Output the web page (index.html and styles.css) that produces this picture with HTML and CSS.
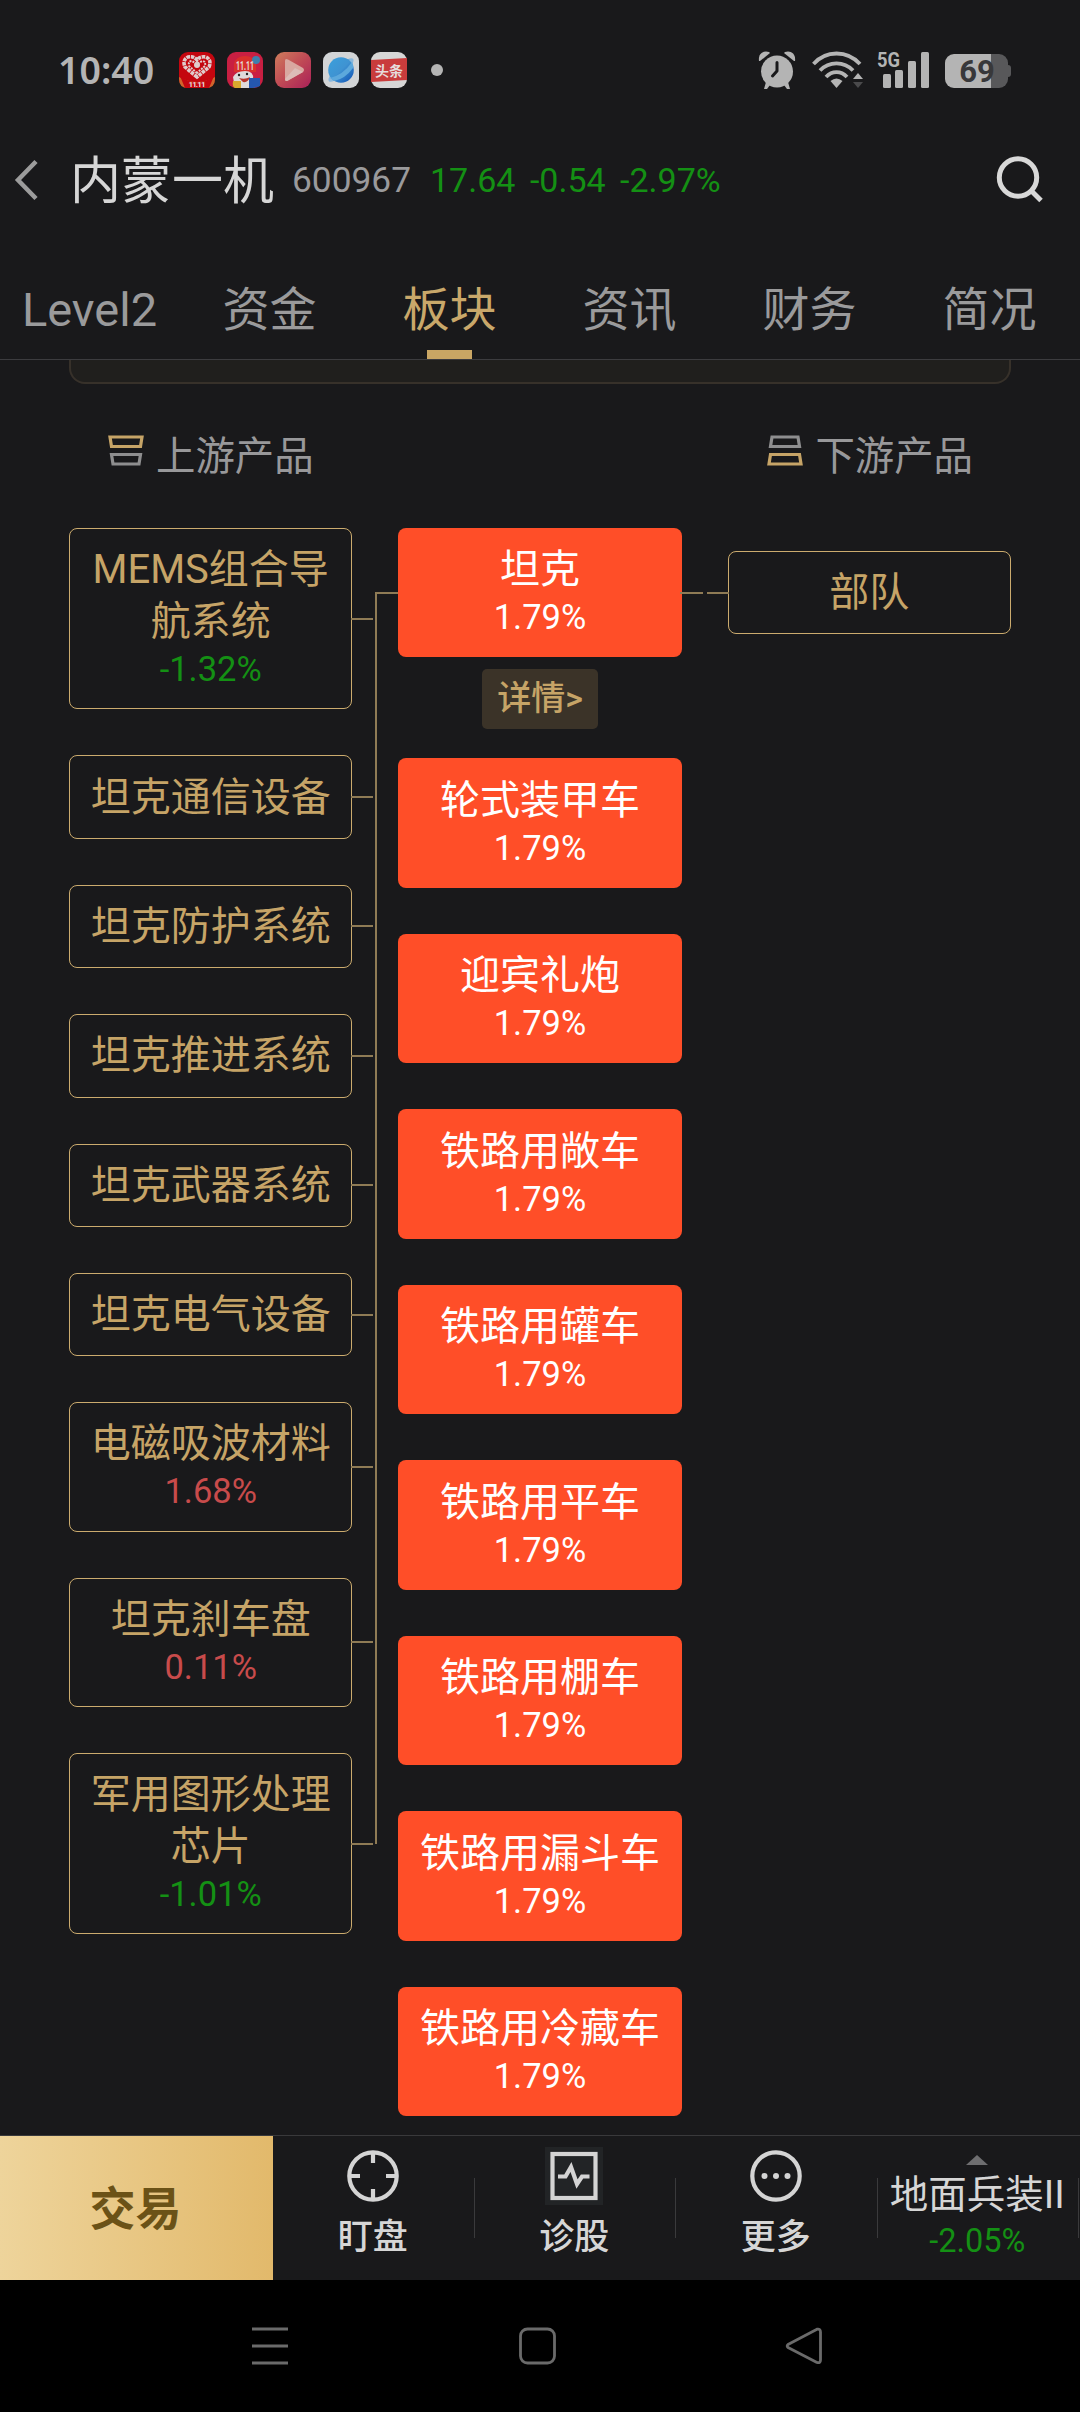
FILE: index.html
```html
<!DOCTYPE html>
<html lang="zh-CN">
<head>
<meta charset="UTF-8">
<meta name="viewport" content="width=device-width, initial-scale=1.0">
<title>内蒙一机 600967</title>
<link rel="stylesheet" href="styles.css">
</head>
<body>

<div class="status-bar">
  <span class="time">10:40</span>
  <div class="notifications">
    <svg class="app-icon" viewBox="0 0 36 36">
      <rect width="36" height="36" rx="9" fill="#c4060f"/>
      <path d="M0 25 Q18 35 36 25 V27 Q36 36 27 36 H9 Q0 36 0 27Z" fill="#d2642c"/>
      <path d="M1 24 Q18 37 35 24 L30 36 H6Z" fill="#c4060f"/>
      <path d="M18 25 L6 15 Q3 8 9 5 Q15 4 18 8 Q21 4 27 5 Q33 8 30 15Z" fill="none" stroke="#e0cccc" stroke-width="3.600" stroke-dasharray="3.500 .8"/>
      <path d="M18 21 L10 14 Q9 9 13 9 L18 12 L23 9 Q27 9 26 14Z" fill="none" stroke="#e0cccc" stroke-width="2" stroke-dasharray="2 1"/>
      <circle cx="18" cy="13" r="3" fill="#e0cccc"/>
      <text x="18" y="34.500" class="icon-text" font-size="8" textLength="17">11.11</text>
    </svg>
    <svg class="app-icon" viewBox="0 0 36 36">
      <rect width="36" height="36" rx="9" fill="#c81f42"/>
      <path d="M7 20 V12 Q9 4 18 4 Q27 4 29 12 V20Z" fill="#d8302c"/>
      <circle cx="29" cy="8" r="4" fill="#3d7fae"/>
      <text x="18" y="18" class="icon-text" font-size="12" textLength="18" lengthAdjust="spacingAndGlyphs">11.11</text>
      <path d="M6 25 Q9 19 18 19 Q27 19 26 27 V36 H8Z" fill="#dedada"/>
      <path d="M12 26 Q18 28 23 25 Q21 31 16 30Z" fill="#b8362c"/>
      <circle cx="12" cy="23" r="1.2" fill="#222"/><circle cx="20" cy="22" r="1.2" fill="#222"/>
      <path d="M6 29 H14 V36 H8 Q5 35 6 29Z" fill="#d9a92e"/>
      <path d="M22 26 H33 V34 Q30 36 22 36Z" fill="#2457ae"/>
    </svg>
    <svg class="app-icon" viewBox="0 0 36 36">
      <defs>
        <linearGradient id="video" x1="0" y1="0" x2="1" y2="1">
          <stop offset="0" stop-color="#cf7d5c"/><stop offset=".5" stop-color="#c04a55"/><stop offset="1" stop-color="#a92058"/>
        </linearGradient>
        <linearGradient id="planet" x1="0" y1="0" x2="1" y2="1">
          <stop offset="0" stop-color="#3ba0dc"/><stop offset=".5" stop-color="#3f93d2"/><stop offset="1" stop-color="#0d4fb4"/>
        </linearGradient>
      </defs>
      <rect width="36" height="36" rx="9" fill="url(#video)"/>
      <path d="M10 9 Q10 6 13 7.500 L28 16 Q30 18 28 20 L13 28.500 Q10 30 10 27Z" fill="#d9a8a0"/>
      <path d="M10 27 L20 16 L28 20 L13 28.500 Q10 30 10 27Z" fill="#dcbcb7"/>
    </svg>
    <svg class="app-icon" viewBox="0 0 36 36">
      <rect width="36" height="36" rx="9" fill="#d2d4d6"/>
      <ellipse cx="18" cy="18" rx="16.500" ry="5" transform="rotate(-43 18 18)" fill="#8ab8dc"/>
      <circle cx="18" cy="18" r="12.800" fill="url(#planet)"/>
      <path d="M7 26 Q20 23 29 10 Q31 14 30 16 Q22 27 11 29Z" fill="#5ca8dc"/>
    </svg>
    <svg class="app-icon" viewBox="0 0 36 36">
      <rect width="36" height="36" rx="9" fill="#d6d6d6"/>
      <path d="M0 8 L36 6 V28 L0 30Z" fill="#c93c3c"/>
      <text x="18" y="24" class="icon-text" font-size="14">头条</text>
    </svg>
  </div>
  <span class="dot"></span>
  <div class="system">
    <svg class="alarm" width="38" height="38" viewBox="0 0 38 38">
      <g fill="#b4b4b4">
        <path d="M1 10 C0 3 5 -1 11 1 L12 2 L2 10Z"/>
        <path d="M37 10 C38 3 33 -1 27 1 L26 2 L36 10Z"/>
        <circle cx="19" cy="20.500" r="16"/>
        <path d="M8 31 L12 34 L9 38 H6Z M30 31 L26 34 L29 38 H32Z"/>
      </g>
      <path d="M19 11.500 V20 L14.500 25" fill="none" stroke="#19191b" stroke-width="3" stroke-linecap="round" stroke-linejoin="round"/>
    </svg>
    <svg class="wifi" width="51" height="38" viewBox="0 0 51 38">
      <g fill="none" stroke="#b4b4b4" stroke-width="3.800">
        <path d="M1.500 13 C14 -1 35 -1 48 13"/>
        <path d="M8 19.500 C17 10 32 10 41 19.500"/>
        <path d="M14 26 C20 19.500 29 19.500 35 26"/>
      </g>
      <path d="M18.500 30 Q24.500 25 30.500 30 L24.500 37Z" fill="#b4b4b4"/>
      <path d="M41 28 L46 22 L51 28Z" fill="#b4b4b4"/>
      <path d="M41 31 L46 37 L51 31Z" fill="#4a4a4c"/>
    </svg>
    <svg class="signal" width="53" height="46" viewBox="0 -8 53 46">
      <text x="0" y="16" textLength="23" lengthAdjust="spacingAndGlyphs" class="net">5G</text>
      <g fill="#b4b4b4">
        <rect x="6" y="23" width="8" height="14" rx="1.500"/>
        <rect x="18" y="19" width="8" height="18" rx="1.500"/>
        <rect x="31" y="10" width="8" height="27" rx="1.500"/>
        <rect x="44" y="1" width="8" height="36" rx="1.500"/>
      </g>
    </svg>
    <div class="battery">69</div>
  </div>
</div>

<div class="header">
  <svg class="back" width="24" height="42" viewBox="0 0 24 42">
    <path d="M22 2.500 L4 21 L22 39.500" fill="none" stroke="#9c9c9c" stroke-width="4.500"/>
  </svg>
  <h1>内蒙一机</h1>
  <span class="code">600967</span>
  <div class="quote">
    <span>17.64</span>
    <span>-0.54</span>
    <span>-2.97%</span>
  </div>
  <svg class="search" width="48" height="50" viewBox="0 0 48 50">
    <circle cx="22" cy="22.500" r="18.700" fill="none" stroke="#d8d8d8" stroke-width="5"/>
    <path d="M35.500 36 L45 45.500" stroke="#d8d8d8" stroke-width="5"/>
  </svg>
</div>

<div class="tabs">
  <div class="tab">Level2</div>
  <div class="tab">资金</div>
  <div class="tab active">板块</div>
  <div class="tab">资讯</div>
  <div class="tab">财务</div>
  <div class="tab">简况</div>
</div>

<div class="content">
  <div class="card-end"></div>

  <div class="legend">
    <div class="legend-item">
      <svg width="36" height="32" viewBox="0 0 36 32" fill="none" stroke-width="3.200">
        <path d="M2 2 H34 L32.500 11.500 H3.500Z" stroke="#c6a467"/>
        <path d="M3.500 19.500 H32.500 L31 29 H5Z" stroke="#8e8e8f"/>
      </svg>
      <span>上游产品</span>
    </div>
    <div class="legend-item">
      <svg width="36" height="32" viewBox="0 0 36 32" fill="none" stroke-width="3.200">
        <path d="M5 2 H31 L32.500 11.500 H3.500Z" stroke="#8e8e8f"/>
        <path d="M3.500 19.500 H32.500 L34 29 H2Z" stroke="#c6a467"/>
      </svg>
      <span>下游产品</span>
    </div>
  </div>

  <div class="chain">
    <div class="column upstream">
      <div class="box">MEMS组合导航系统<span class="pct down">-1.32%</span></div>
      <div class="box">坦克通信设备</div>
      <div class="box">坦克防护系统</div>
      <div class="box">坦克推进系统</div>
      <div class="box">坦克武器系统</div>
      <div class="box">坦克电气设备</div>
      <div class="box">电磁吸波材料<span class="pct up">1.68%</span></div>
      <div class="box">坦克刹车盘<span class="pct up">0.11%</span></div>
      <div class="box">军用图形处理芯片<span class="pct down">-1.01%</span></div>
      <div class="trunk"></div>
    </div>

    <div class="column products">
      <div class="product current">坦克<span class="pct">1.79%</span></div>
      <div class="detail">详情&gt;</div>
      <div class="product">轮式装甲车<span class="pct">1.79%</span></div>
      <div class="product">迎宾礼炮<span class="pct">1.79%</span></div>
      <div class="product">铁路用敞车<span class="pct">1.79%</span></div>
      <div class="product">铁路用罐车<span class="pct">1.79%</span></div>
      <div class="product">铁路用平车<span class="pct">1.79%</span></div>
      <div class="product">铁路用棚车<span class="pct">1.79%</span></div>
      <div class="product">铁路用漏斗车<span class="pct">1.79%</span></div>
      <div class="product">铁路用冷藏车<span class="pct">1.79%</span></div>
    </div>

    <div class="column downstream">
      <div class="box">部队</div>
    </div>
  </div>
</div>

<div class="bottom-bar">
  <div class="trade">交易</div>
  <div class="action">
    <svg width="58" height="58" viewBox="0 0 58 58" fill="none" stroke="#d4d4d4" stroke-width="4.200">
      <circle cx="29" cy="29" r="23.700"/>
      <path d="M29 5 V16 M29 42 V53 M5 29 H16 M42 29 H53"/>
    </svg>
    <span>盯盘</span>
  </div>
  <div class="action">
    <svg width="58" height="58" viewBox="0 0 58 58" fill="none" stroke="#d4d4d4" stroke-width="4.200">
      <rect width="58" height="58" fill="#222426" stroke="none"/>
      <rect x="7.500" y="7" width="43" height="44"/>
      <path d="M13 29.500 H20.500 L26 20 L32 37 L37 29.500 H44.500"/>
    </svg>
    <span>诊股</span>
  </div>
  <div class="action">
    <svg width="58" height="58" viewBox="0 0 58 58">
      <circle cx="29" cy="29" r="23.700" fill="none" stroke="#d4d4d4" stroke-width="4.200"/>
      <g fill="#d4d4d4"><circle cx="17.500" cy="29" r="3"/><circle cx="29" cy="29" r="3"/><circle cx="40.500" cy="29" r="3"/></g>
    </svg>
    <span>更多</span>
  </div>
  <div class="sector">
    <svg width="22" height="10" viewBox="0 0 22 10"><path d="M0 10 L11 0 L22 10Z" fill="#6e6e70"/></svg>
    <span class="sector-name">地面兵装II</span>
    <span class="sector-pct">-2.05%</span>
  </div>
</div>

<div class="nav-bar">
  <svg width="38" height="38" viewBox="0 0 38 38" fill="none" stroke="#6a6a6a" stroke-width="3">
    <path d="M1 2 H37 M1 19 H37 M1 36 H37"/>
  </svg>
  <svg width="38" height="38" viewBox="0 0 38 38" fill="none" stroke="#6a6a6a" stroke-width="2.800">
    <rect x="2.500" y="2" width="34" height="34" rx="7"/>
  </svg>
  <svg width="38" height="38" viewBox="0 0 38 38" fill="none" stroke="#6a6a6a" stroke-width="2.800" stroke-linejoin="round">
    <path d="M32 2.200 L3 17.500 Q1.500 19 3 20.500 L32 35.500 Q35.500 36.500 35.500 33 V5 Q35.500 1.500 32 2.200Z"/>
  </svg>
</div>

</body>
</html>
```
FILE: styles.css
```css
* {
  box-sizing: border-box;
}

body {
  margin: 0;
  width: 1080px;
  height: 2412px;
  display: flex;
  flex-direction: column;
  overflow: hidden;
  background-color: #19191b;
  color: #d6d6d6;
  font-family: Roboto, "Noto Sans CJK SC", sans-serif;
}

svg {
  display: block;
  flex-shrink: 0;
}

/* status bar */
.status-bar {
  height: 140px;
  padding: 0 69px 0 58px;
  display: flex;
  align-items: center;
  flex-shrink: 0;
}

.time {
  width: 121px;
  font: 600 37.5px/40px "Noto Sans", sans-serif;
  color: #b4b4b4;
}

.notifications {
  display: flex;
  gap: 12px;
}

.app-icon {
  width: 36px;
  height: 36px;
}

.icon-text {
  fill: #e6dcdc;
  font-weight: 700;
  text-anchor: middle;
}

.dot {
  width: 12px;
  height: 12px;
  margin-left: 24px;
  border-radius: 50%;
  background-color: #b4b4b4;
}

.system {
  display: flex;
  align-items: center;
  margin-left: auto;
}

.wifi {
  margin-left: 16px;
}

.signal {
  margin: -8px 0 0 14px;
}

.net {
  fill: #b4b4b4;
  font-size: 21px;
  font-weight: 700;
}

.battery {
  position: relative;
  width: 63px;
  height: 34px;
  margin: 2px 3px 0 15px;
  padding-left: 1px;
  border-radius: 9px;
  background: linear-gradient(90deg, #b4b4b4 46px, #58585a 46px);
  color: #38383a;
  font-size: 31px;
  font-weight: 700;
  line-height: 35px;
  text-align: center;
}

.battery::after {
  content: "";
  position: absolute;
  left: 63px;
  top: 11px;
  width: 3px;
  height: 12px;
  border-radius: 0 3px 3px 0;
  background-color: #58585a;
}

/* header */
.header {
  height: 80px;
  padding: 0 36px 0 14px;
  display: flex;
  align-items: center;
  flex-shrink: 0;
}

h1 {
  width: 222px;
  margin: 0 0 0 32px;
  padding-top: 3px;
  font-size: 51px;
  font-weight: 400;
  line-height: 77px;
}

.code {
  width: 138px;
  color: #9a9a9c;
  font-size: 35.3px;
}

.quote {
  display: flex;
  gap: 14.5px;
  color: #149014;
  font-size: 34px;
}

.search {
  margin-left: auto;
}

/* tabs */
.tabs {
  height: 140px;
  display: flex;
  flex-shrink: 0;
  border-bottom: 1px solid #3c3c3f;
}

.tab {
  width: 180px;
  position: relative;
  padding-right: 1px;
  color: #9a9a9b;
  font-size: 47px;
  line-height: 180px;
  text-align: center;
}

.tab.active {
  color: #c9a86a;
}

.tab.active::after {
  content: "";
  position: absolute;
  left: 67px;
  bottom: 0;
  width: 45px;
  height: 9px;
  background-color: #c9a664;
}

/* industry chain */
.content {
  height: 1775px;
  padding: 0 69px;
  overflow: hidden;
  flex-shrink: 0;
}

.card-end {
  height: 24px;
  border: 2px solid #37312a;
  border-top: none;
  border-radius: 0 0 16px 16px;
  background-color: #201f1d;
}

.legend {
  height: 144px;
  padding: 0 38px 0 39px;
  display: flex;
  justify-content: space-between;
  align-items: center;
  color: #98989a;
  font-size: 39.4px;
}

.legend-item {
  display: flex;
  align-items: center;
  gap: 12px;
}

.legend-item svg {
  margin-top: -10px;
}

.legend-item span {
  margin: -4px 0 4px;
}

.chain {
  display: flex;
  align-items: flex-start;
  gap: 46px;
}

.column {
  position: relative;
  width: 283.5px;
  display: flex;
  flex-direction: column;
  gap: 46px;
  font-size: 40px;
  line-height: 52px;
  text-align: center;
}

.box {
  position: relative;
  padding: 15.2px 14px 14.2px;
  border: 1px solid #cbab6e;
  border-radius: 8px;
  color: #c6a467;
}

.upstream .box::after {
  content: "";
  position: absolute;
  left: 100%;
  top: calc(50% - 1px);
  width: 22px;
  height: 2px;
  background-color: #8f7b55;
}

.trunk {
  position: absolute;
  left: 306px;
  top: 64px;
  bottom: 90px;
  width: 25px;
  border-left: 2px solid #8f7b55;
  border-top: 2px solid #8f7b55;
}

.pct {
  display: block;
  margin-bottom: 3px;
  font-size: 34.5px;
  line-height: 43px;
}

.up {
  color: #c84b4b;
}

.down {
  color: #149014;
}

.product {
  padding: 16.2px 10px 15.3px;
  border-radius: 8px;
  background-color: #ff4e28;
  color: #fff;
}

.product.current {
  position: relative;
}

.current::after {
  content: "";
  position: absolute;
  left: 282px;
  top: 64px;
  width: 23px;
  height: 2px;
  background-color: #8f7b55;
}

.detail {
  align-self: center;
  width: 116px;
  height: 60px;
  margin: -34px 0 -17px;
  border-radius: 5px;
  background-color: #3b3328;
  color: #c6a467;
  font-size: 34px;
  font-weight: 500;
  line-height: 58px;
}

.downstream {
  padding-top: 23px;
}

.downstream .box::before {
  content: "";
  position: absolute;
  right: 100%;
  top: 40px;
  width: 22px;
  height: 2px;
  background-color: #8f7b55;
}

/* bottom bar */
.bottom-bar {
  height: 145px;
  display: flex;
  flex-shrink: 0;
  border-top: 1px solid #39393b;
}

.trade {
  width: 273px;
  padding-right: 2px;
  background: linear-gradient(90deg, #eed49b, #e2b96b);
  color: #6b5217;
  font-size: 46px;
  font-weight: 700;
  line-height: 147px;
  text-align: center;
}

.action,
.sector {
  width: 201.5px;
  display: flex;
  flex-direction: column;
  align-items: center;
  background: linear-gradient(#3a3a3c, #3a3a3c) right 42px / 1px 60px no-repeat;
  white-space: nowrap;
}

.action {
  padding: 11px 2px 0 0;
  font-size: 35px;
  font-weight: 500;
  line-height: 50px;
}

.action span {
  margin-top: 8px;
}

.sector {
  padding: 19px 2px 0 0;
}

.sector-name {
  margin-top: 4px;
  font-size: 38.5px;
  line-height: 52px;
}

.sector-pct {
  margin-top: 1px;
  color: #149014;
  font-size: 32.5px;
  line-height: 38px;
}

/* system navigation */
.nav-bar {
  flex: 1;
  padding: 0 257px 0 251px;
  display: flex;
  justify-content: space-between;
  align-items: center;
  background-color: #000;
}
```
